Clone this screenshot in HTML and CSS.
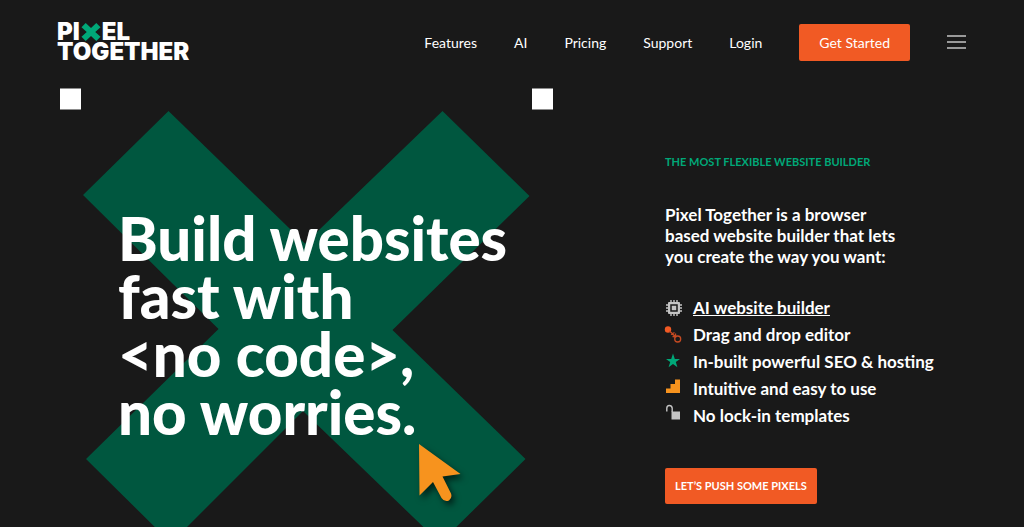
FILE: index.html
```html
<!DOCTYPE html>
<html lang="en">
<head>
    <meta charset="UTF-8">
    <meta name="viewport" content="width=device-width, initial-scale=1.0">
    <title>Pixel Together</title>
    <link rel="stylesheet" href="styles.css">
</head>
<body>

<!-- Header -->
<header class="header">
    <a href="#" class="logo">
        <span class="logo-row">PI<svg class="logo-x" viewBox="0 0 18 17" aria-hidden="true"><path d="M4 0 9 4.800 14 0 18 4 13 8.500 18 13 14 17 9 12.200 4 17 0 13 5 8.500 0 4z"/></svg>EL</span>
        <span class="logo-row">TOGETHER</span>
    </a>
    <nav class="nav">
        <a href="#">Features</a>
        <a href="#">AI</a>
        <a href="#">Pricing</a>
        <a href="#">Support</a>
        <a href="#">Login</a>
        <a href="#" class="btn">Get Started</a>
        <button type="button" class="menu-button" aria-label="Menu">
            <span></span><span></span><span></span>
        </button>
    </nav>
</header>

<!-- Hero -->
<main class="hero">
    <section class="hero-art">
        <svg class="cross" viewBox="60 88 493 439" aria-hidden="true">
            <path fill="#fff" d="M60 88.500h21v21H60zM532 88.500h21v21h-21z"/>
            <path fill="#00573f" d="M168.500 111 305 243.500 442.500 111 529.500 196 392.500 330 525.500 459 440 543 303 411 171 543 86 459 218.500 329 83 195z"/>
        </svg>
        <h1>Build websites<br>fast with<br>&lt;no code&gt;,<br>no worries.</h1>
        <svg class="cursor" viewBox="0 0 42 58" aria-hidden="true">
            <path d="M0 0 41.500 30 23.500 32.500 32 49.500Q33.500 54 30 56.500 25.500 58.500 22.500 54L14 38 .5 51.500z"/>
        </svg>
    </section>

    <section class="hero-text">
        <h2>THE MOST FLEXIBLE WEBSITE BUILDER</h2>
        <p>Pixel Together is a browser<br>based website builder that lets<br>you create the way you want:</p>
        <ul class="features">
            <li>
                <svg viewBox="0 0 18 18" aria-hidden="true"><path d="M6 1v16M9 1v16M12 1v16M1 6h16M1 9h16M1 12h16" stroke="#c4c4c4" stroke-width="1.400"/><rect x="3" y="3" width="12" height="12" rx="1" fill="#c4c4c4"/><rect x="6" y="6" width="6" height="6" fill="#c4c4c4" stroke="#191919" stroke-width="1.500"/></svg>
                <a href="#">AI website builder</a>
            </li>
            <li>
                <svg viewBox="0 0 18 18" aria-hidden="true"><circle cx="3" cy="3.500" r="3.200" fill="#f15a24"/><path d="M4.500 5 10.700 10.700M6 8.500 9.500 6.500M7.500 10.500 10.700 10.700 10.500 7.500" fill="none" stroke="#c54a22" stroke-width="1.300"/><circle cx="12.700" cy="13" r="3" fill="none" stroke="#c54a22" stroke-width="1.300"/></svg>
                Drag and drop editor
            </li>
            <li>
                <svg viewBox="0 0 18 18" aria-hidden="true"><path fill="#00a878" d="M8 .5 9.800 6H15L10.800 9.100 12.400 14.200 8 11 3.600 14.200 5.200 9.100 1 6H6.200z"/></svg>
                In-built powerful SEO &amp; hosting
            </li>
            <li>
                <svg viewBox="0 0 18 18" aria-hidden="true"><path fill="#f7931e" d="M1 13V8.500H5.500V4H10V-.5H15V13z"/></svg>
                Intuitive and easy to use
            </li>
            <li>
                <svg viewBox="0 0 18 18" aria-hidden="true"><path d="M1.800 4.500V1.200Q1.800-1.500 4.300-1.500T7.200 1.200V5" fill="none" stroke="#c4c4c4" stroke-width="1.400"/><path fill="#c4c4c4" d="M6.500 4.500H15V12.500H6.500z"/></svg>
                No lock-in templates
            </li>
        </ul>
        <a href="#" class="btn btn-push">LET’S PUSH SOME PIXELS</a>
    </section>
</main>

</body>
</html>
```

FILE: styles.css
```css
* {
    box-sizing: border-box;
}

body {
    margin: 0;
    background-color: #191919;
    color: #fff;
    font-family: Lato, "Liberation Sans", sans-serif;
}

a {
    color: inherit;
}

/* Header */
.header {
    display: flex;
    justify-content: space-between;
    align-items: center;
    height: 84px;
    padding: 0 58px 0 57px;
}

.logo {
    font-family: Inter, sans-serif;
    font-size: 24px;
    font-weight: 900;
    line-height: 20px;
    text-decoration: none;
}

.logo-row {
    display: flex;
    align-items: center;
}

.logo-x {
    width: 20px;
    height: 18px;
    margin: 0 1px;
    fill: #00a878;
}

.nav {
    display: flex;
    align-items: center;
    gap: 37px;
    font-size: 14px;
}

.nav a {
    text-decoration: none;
}

.btn {
    display: inline-block;
    padding: 0 20px;
    border-radius: 2px;
    background-color: #f15a24;
    line-height: 37px;
    text-decoration: none;
}

.menu-button {
    display: flex;
    flex-direction: column;
    gap: 4px;
    width: 19px;
    padding: 0;
    border: 0;
    background: none;
}

.menu-button span {
    width: 100%;
    height: 2px;
    background-color: #999;
}

/* Hero */
.hero {
    display: grid;
    grid-template-columns: 493fr 301fr;
    column-gap: 112px;
    padding: 4px 58px 0 60px;
}

.hero-art {
    position: relative;
    display: grid;
}

.hero-art h1,
.cross {
    grid-area: 1 / 1;
}

.cross {
    width: 100%;
}

.hero-art h1 {
    margin: 0;
    padding: 121px 0 0 58px;
    font-size: 60px;
    font-weight: 900;
    line-height: 58px;
    white-space: nowrap;
    z-index: 1;
}

/* pointer lies over the cross */
.cursor {
    position: absolute;
    left: 359px;
    top: 356px;
    width: 42px;
    height: 58px;
    fill: #f7931e;
    overflow: visible;
    filter: drop-shadow(3px 4px 3px rgba(0, 0, 0, 0.6));
}

.hero-text {
    padding-top: 66px;
    font-weight: 700;
    white-space: nowrap;
}

.hero-text h2 {
    margin: 0 0 34px;
    color: #00a878;
    font-size: 11px;
    line-height: 16px;
}

.hero-text p {
    margin: 0 0 27px;
    font-size: 17px;
    line-height: 21px;
}

.features {
    margin: 0 0 39px;
    padding: 0;
    list-style: none;
    font-size: 17px;
    line-height: 27px;
}

.features li {
    display: flex;
    align-items: center;
    gap: 10px;
}

.features svg {
    width: 18px;
    height: 18px;
    overflow: visible;
}

.btn-push {
    padding: 0 10px;
    font-size: 11px;
    line-height: 36px;
}
```
